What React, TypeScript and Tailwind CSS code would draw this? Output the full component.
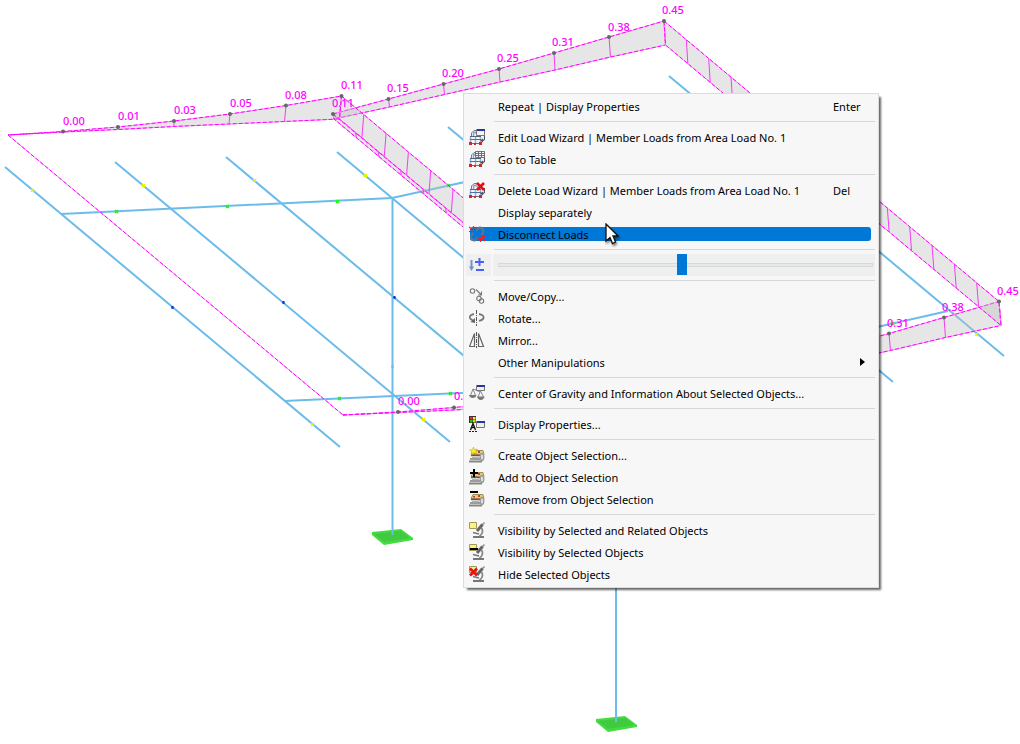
import { useState } from "react";
import type { ReactNode } from "react";

type Point = [number, number];

const toPoints = (points: Point[]) => points.map(p => p.join(",")).join(" ");

const members: Point[][] = [
  [[5, 167], [340, 447]],
  [[115, 162], [450, 442]],
  [[226, 157], [561, 437]],
  [[337, 152], [672, 432]],
  [[448, 127], [783, 407]],
  [[558, 102], [893, 382]],
  [[669, 76], [1004, 356]],
  [[61, 214], [392, 198], [725, 125]],
  [[284, 401], [616, 386], [948, 311]],
  [[392.5, 198], [392.5, 535]],
  [[616, 386], [616, 722]],
];

const leftTop: Point[] = [[8, 135], [63, 131.5], [118, 127], [174, 121], [230, 114], [286, 105.5], [341.5, 96]];
const leftBase: Point[] = [[8, 135], [63, 132], [118, 129.5], [174, 126.5], [229, 124], [284.5, 121.5], [339.5, 119]];
const backTop: Point[] = [[333, 114], [388.5, 99], [443.5, 84], [499, 69], [554, 53], [609, 37], [664, 21]];
const backBase: Point[] = [[334, 119], [389.5, 107], [444.5, 94.5], [500, 82], [555, 70], [610.5, 57], [665.5, 45]];
const frontTop: Point[] = [[343, 415], [398, 412], [454, 407.5], [510, 402], [666, 394], [889, 333.5], [944, 317.5], [999, 301.5]];
const frontBase: Point[] = [[343, 415], [398, 412.5], [454, 410], [510, 407], [667, 399], [890.5, 350.5], [945.5, 337.5], [1001, 325.5]];

// points spread evenly between the two ends of a member
const divide = (from: Point, to: Point, count: number): Point[] =>
  Array.from({ length: count + 1 }, (_, i) => [
    from[0] + ((to[0] - from[0]) * i) / count,
    from[1] + ((to[1] - from[1]) * i) / count,
  ]);

const strips: { top: Point[]; base: Point[] }[] = [
  { top: leftTop, base: leftBase },
  { top: backTop, base: backBase },
  { top: frontTop, base: frontBase },
  { top: divide([341.5, 96], [676, 376], 15), base: divide([339.5, 119], [675, 400], 15) },
  { top: divide([333, 114], [671, 396], 15), base: divide([334, 119], [671, 401], 15) },
  { top: divide([664, 21], [999, 301.5], 15), base: divide([665.5, 45], [1001, 325.5], 15) },
];

const loadDots: Point[] = [...leftTop.slice(1), ...backTop, ...frontTop.slice(1, 3), ...frontTop.slice(5)];

const labels: [number, number, string][] = [
  [63, 125, "0.00"],
  [118, 120, "0.01"],
  [174, 114, "0.03"],
  [230, 107, "0.05"],
  [285, 99, "0.08"],
  [341, 89, "0.11"],
  [332, 107, "0.11"],
  [387, 92, "0.15"],
  [442, 77, "0.20"],
  [497, 62, "0.25"],
  [552, 46, "0.31"],
  [608, 31, "0.38"],
  [662, 14, "0.45"],
  [887, 327, "0.31"],
  [942, 311, "0.38"],
  [997, 295, "0.45"],
  [398, 405, "0.00"],
  [454, 400, "0.01"],
];

const nodes: { color: string; size: number; at: Point[] }[] = [
  { color: "#e6f500", size: 3, at: [[32, 190], [143, 185], [254, 180], [365, 175], [312, 424], [423, 419], [976, 334]] },
  { color: "#1ff01f", size: 3, at: [[116, 211], [227, 206], [337, 201], [448, 185], [339, 398], [450, 393], [892, 323]] },
  { color: "#0b2fc4", size: 2, at: [[172, 307], [283, 302], [394, 297]] },
  { color: "#7ab4ee", size: 2, at: [[392, 366]] },
];

const supports: Point[] = [[392, 537], [616, 724]];

const Scene = () => (
  <svg viewBox="0 0 1020 744" className="block w-full" aria-label="Structural model">
    {supports.map(([x, y]) => (
      <g key={x}>
        <polygon points={toPoints([[x - 20, y - 5], [x + 9, y - 8], [x + 21, y + 1], [x + 21, y + 3], [x - 8, y + 8], [x - 20, y - 2]])} fill="#43dc43" />
        <polygon points={toPoints([[x - 18, y - 3], [x + 9, y - 6], [x + 18, y + 1], [x - 8, y + 5]])} fill="#3fca3f" />
      </g>
    ))}
    {members.map((m, i) => (
      <polyline key={i} points={toPoints(m)} fill="none" stroke="#6cbcea" strokeWidth="2" />
    ))}
    {nodes.map(({ color, size, at }) =>
      at.map(([x, y]) => (
        <path
          key={`${x}-${y}`}
          d={`M${x - size / 2 + 0.5} ${y - size / 2 + 0.5}l${size} ${size}m0 ${-size}l${-size} ${size}`}
          stroke={color}
          strokeWidth="1.5"
        />
      ))
    )}
    {strips.map(({ top, base }, i) => {
      const outline = toPoints([...top, ...[...base].reverse()]);
      return (
        <g key={i}>
          <polygon points={outline} fill="#c0c0c0" fillOpacity="0.4" stroke="#ff8cff" />
          <polygon points={outline} fill="none" stroke="#f0f" strokeDasharray="4 2" />
          {top.slice(1, -1).map(([x, y], j) => (
            <path key={j} d={`M${x} ${y}L${base[j + 1][0]} ${base[j + 1][1]}`} stroke="#f53df5" />
          ))}
        </g>
      );
    })}
    <path d="M8 135L343 415" stroke="#ff8cff" />
    <path d="M8 135L343 415" stroke="#f0f" strokeDasharray="4 2" />
    {loadDots.map(([x, y], i) => (
      <circle key={i} cx={x} cy={y} r="2" fill="#666" />
    ))}
    {labels.map(([x, y, value]) => (
      <text key={`${x}-${y}`} x={x} y={y} fill="#f0f" className="font-['Noto_Sans',sans-serif] text-[11px] font-medium">
        {value}
      </text>
    ))}
  </svg>
);

const Icon = ({ children }: { children: ReactNode }) => (
  <svg viewBox="0 0 16 16" className="block size-4" fill="none" aria-hidden="true">
    {children}
  </svg>
);

const LoadFrame = () => (
  <>
    <path d="M2.500 7V4L5 1.500h3" stroke="#6b7f9c" />
    <path d="M4 3.500h4" stroke="#8aa6cf" strokeWidth="2" />
    <path d="M4.500 4v4M8.500 4v4" stroke="#8aa6cf" strokeWidth="1.500" />
    <path d="M1 7.500h11" stroke="#54627c" />
    <path d="M1.500 8v6M6.500 8v6M11.500 8v6" stroke="#8fb0e0" strokeWidth="1.500" />
    <path d="M1 10.500h11" stroke="#4f6fa8" />
    <path d="M1 14.500h11" stroke="#77707c" />
    <path d="M0 13h3v3H0zM5 14h2v2H5zM10 13h3v3h-3z" fill="#d8232a" />
    <path d="M15.500 6v4.500l-2.500 2" stroke="#555" strokeWidth="1.200" />
    <path d="M11 11.500l3-2v4z" fill="#555" />
  </>
);

const EditIcon = () => (
  <Icon>
    <LoadFrame />
    <path d="M7.500 .5h8v6h-8z" fill="#f4f4f4" stroke="#777" />
    <path d="M8 0h8v2H8z" fill="#2638a0" />
  </Icon>
);

const TableIcon = () => (
  <Icon>
    <LoadFrame />
    <path d="M6.500 .5h9v6h-9zM6 2.500h10M6 4.500h10M9.500 0v7M12.500 0v7" fill="#f4f4f4" stroke="#666" strokeWidth=".9" />
  </Icon>
);

const DeleteIcon = () => (
  <Icon>
    <LoadFrame />
    <path d="M8 1l7 7M15 1L8 8" stroke="#e80c10" strokeWidth="2.500" />
  </Icon>
);

const DisconnectIcon = () => (
  <Icon>
    <path d="M4 6.500L2.500 9.500c-1.500 3.500 2.500 6 4.500 4l1.500-2.500" stroke="#5b7396" strokeWidth="2.200" />
    <path d="M12.500 9L14 6.500c1.500-3.500-2.500-6-5-4L7.500 5" stroke="#5b7396" strokeWidth="2.200" />
    <path d="M4.500 0v3M0 1l4 3M0 5.500h3M7.500 1L6 3.500M11.500 12v4M13 12l3 3M13 10.500h3M9.500 11.500l-1.500 3" stroke="#ff1a22" strokeWidth="1.200" />
  </Icon>
);

const ScaleIcon = () => (
  <Icon>
    <path d="M2.500 3v8" stroke="#6e93c9" strokeWidth="2" />
    <path d="M0 9.500h5L2.500 14z" fill="#6e93c9" />
    <path d="M6 5h9M10.500 1v8M7 13h8" stroke="#4a62f2" strokeWidth="2" />
  </Icon>
);

const MoveIcon = () => (
  <Icon>
    <g stroke="#777" strokeWidth="1.100">
      <circle cx="3.500" cy="3" r="2.200" />
      <circle cx="10" cy="10.500" r="2.200" />
      <circle cx="12.500" cy="13" r="2.200" />
      <path d="M7 1.500L12 6.500M12.500 3.500V7H9" />
    </g>
  </Icon>
);

const RotateIcon = () => (
  <Icon>
    <path d="M5 4C2 4.500 .5 6 1 8c.3 1 1.500 2 3 2.500M10 4c3 .5 5 2 4.500 4-.4 1.500-2 2.300-4.500 2.800" stroke="#777" strokeWidth="1.800" />
    <path d="M1.500 12L6 8v5z" fill="#666" />
    <path d="M7.500 0v16" stroke="#555" strokeDasharray="4 1 1 1" />
  </Icon>
);

const MirrorIcon = () => (
  <Icon>
    <path d="M5.500 1.500v13h-5zM9.500 1.500v13h5z" stroke="#666" strokeWidth="1.200" />
    <path d="M7.500 0v16" stroke="#555" strokeDasharray="4 1 1 1" />
  </Icon>
);

const GravityIcon = () => (
  <Icon>
    <path d="M4 4L1.500 10.500M4 4l2.500 6.500M4.500 4L11 7M11.500 6L9 12M11.500 6L14.500 12" stroke="#888" />
    <path d="M0 10h7.500c-.5 4-7 4-7.500 0zM8 11.500h7.500c-.5 4.500-7 4.500-7.500 0z" fill="#777" />
    <path d="M7.500 .5h8v5h-8z" fill="#eee" stroke="#777" />
    <path d="M8 0h8v2H8z" fill="#2638a0" />
  </Icon>
);

const DisplayIcon = () => (
  <Icon>
    <path d="M0 0h7v7H0z" fill="#333" />
    <path d="M1 1h2.500v2.500H1z" fill="#f22" />
    <path d="M4 1h2.500v2.500H4z" fill="#fe2" />
    <path d="M1 4h2.500v2.500H1z" fill="#18c818" />
    <path d="M4 4h2.500v2.500H4z" fill="#ded820" />
    <path d="M1.500 14L4 7.500 6.500 14M2.500 11.500h3" stroke="#111" strokeWidth="1.400" />
    <path d="M0 15.500h8" stroke="#222" strokeDasharray="2 1" />
    <path d="M7.500 5.500h8v6h-8z" fill="#eee" stroke="#777" />
    <path d="M8 5h8v2H8z" fill="#2638a0" />
  </Icon>
);

const SelectionBase = () => (
  <>
    <path d="M4 3.500h10l1 4H2z" fill="#e3cf72" stroke="#8b7b42" strokeWidth=".8" />
    <path d="M9 4h2v2H9zM4 5h2v1.500H4z" fill="#d23b2c" />
    <path d="M2 8.500h9" stroke="#5c5c50" strokeWidth="1.500" />
    <path d="M3 10.500h7" stroke="#b5b5a8" />
    <path d="M1 12h10" stroke="#5f5f5f" strokeWidth="1.200" />
    <path d="M0 14.500h13" stroke="#868686" strokeWidth="2" />
    <ellipse cx="13" cy="10" rx="1.800" ry="3.500" fill="#ddd" stroke="#999" strokeWidth="1.300" />
  </>
);

const CreateIcon = () => (
  <Icon>
    <SelectionBase />
    <path d="M4.500 0l1 2.500 3-.5-2 2.500 1.500 2.500-3-1-2.500 2 .5-3L.5 3l3-.5z" fill="#f6ec28" stroke="#b9a514" strokeWidth=".5" />
  </Icon>
);

const AddIcon = () => (
  <Icon>
    <SelectionBase />
    <path d="M1 4h8M5 0v8" stroke="#000" strokeWidth="2" />
  </Icon>
);

const RemoveIcon = () => (
  <Icon>
    <SelectionBase />
    <path d="M1 1h8" stroke="#000" strokeWidth="2" />
  </Icon>
);

const Microscope = () => (
  <>
    <path d="M15.500 .5l-3 3" stroke="#999" strokeWidth="1.600" />
    <path d="M13.500 2.500L8 9" stroke="#666" strokeWidth="3" />
    <path d="M12.500 6c2 3 1 6-2 8" stroke="#888" strokeWidth="1.800" />
    <path d="M4 10.500l6 1.500" stroke="#777" strokeWidth="1.500" />
    <path d="M4 15h11" stroke="#777" strokeWidth="2" />
  </>
);

const Sheet = () => <path d="M.5 .5h7v6h-7z" fill="#fdf27c" stroke="#a39a5a" />;

const RelatedIcon = () => (
  <Icon>
    <Microscope />
    <Sheet />
  </Icon>
);

const VisibleIcon = () => (
  <Icon>
    <Microscope />
    <Sheet />
    <path d="M1 5h8" stroke="#000" strokeWidth="2" />
  </Icon>
);

const HideIcon = () => (
  <Icon>
    <Microscope />
    <Sheet />
    <path d="M1 2.500l7 7M8 2.500l-7 7" stroke="#ea1216" strokeWidth="2.800" />
  </Icon>
);

interface MenuItemProps {
  label: string;
  icon?: ReactNode;
  shortcut?: string;
  submenu?: boolean;
  active?: boolean;
}

const MenuItem = ({ label, icon, shortcut, submenu, active }: MenuItemProps) => (
  <button
    type="button"
    role="menuitem"
    aria-haspopup={submenu ? "menu" : undefined}
    className="relative flex h-[22px] w-full items-center pl-[5px] text-left"
  >
    {active && <span className="absolute inset-y-1 left-[6px] right-[7px] rounded-[3px] bg-[#0078d7]" />}
    <span className="relative mr-[13px] size-4 shrink-0">{icon}</span>
    <span className="relative grow whitespace-nowrap pt-[2px]">{label}</span>
    {shortcut && <span className="w-[45px] shrink-0 pt-[2px]">{shortcut}</span>}
    {submenu && (
      <svg viewBox="0 0 5 8" className="mr-[13px] h-2 w-[5px]" aria-hidden="true">
        <path d="M0 0l5 4-5 4z" fill="#000" />
      </svg>
    )}
  </button>
);

const Separator = () => <div role="separator" className="my-1 ml-[30px] mr-[3px] h-px bg-[#d7d7d7]" />;

const ScaleSlider = () => {
  const [scale, setScale] = useState(49);

  return (
    <div className="flex h-[22px] gap-[2px] pl-[2px] pr-[3px]">
      <label htmlFor="load-scale" className="w-[25px] shrink-0 bg-[#efefef] py-[3px] pl-[3px]">
        <ScaleIcon />
      </label>
      <div className="flex grow items-center bg-[#efefef] pl-[5px] pr-[2px]">
        <input
          id="load-scale"
          type="range"
          aria-label="Load scale"
          min={0}
          max={100}
          value={scale}
          onChange={e => setScale(Number(e.target.value))}
          className="h-[22px] w-full appearance-none bg-transparent [&::-webkit-slider-runnable-track]:h-1 [&::-webkit-slider-runnable-track]:border [&::-webkit-slider-runnable-track]:border-[#d6d9d9] [&::-webkit-slider-runnable-track]:bg-[#e7eaea] [&::-webkit-slider-thumb]:mt-[-10px] [&::-webkit-slider-thumb]:h-[21px] [&::-webkit-slider-thumb]:w-[10px] [&::-webkit-slider-thumb]:appearance-none [&::-webkit-slider-thumb]:bg-[#0078d7]"
        />
      </div>
    </div>
  );
};

const ContextMenu = () => (
  <div
    role="menu"
    className="absolute left-[463px] top-[93px] w-[416px] border border-[#dcdcdc] bg-[#f7f7f7] pb-[2px] pt-px font-['Noto_Sans',sans-serif] text-[11px] leading-4 text-black shadow-[3px_3px_2px_-1px_rgba(0,0,0,0.6)]"
  >
    <MenuItem label="Repeat | Display Properties" shortcut="Enter" />
    <Separator />
    <MenuItem label="Edit Load Wizard | Member Loads from Area Load No. 1" icon={<EditIcon />} />
    <MenuItem label="Go to Table" icon={<TableIcon />} />
    <Separator />
    <MenuItem label="Delete Load Wizard | Member Loads from Area Load No. 1" icon={<DeleteIcon />} shortcut="Del" />
    <MenuItem label="Display separately" />
    <MenuItem label="Disconnect Loads" icon={<DisconnectIcon />} active />
    <Separator />
    <ScaleSlider />
    <Separator />
    <MenuItem label="Move/Copy..." icon={<MoveIcon />} />
    <MenuItem label="Rotate..." icon={<RotateIcon />} />
    <MenuItem label="Mirror..." icon={<MirrorIcon />} />
    <MenuItem label="Other Manipulations" submenu />
    <Separator />
    <MenuItem label="Center of Gravity and Information About Selected Objects..." icon={<GravityIcon />} />
    <Separator />
    <MenuItem label="Display Properties..." icon={<DisplayIcon />} />
    <Separator />
    <MenuItem label="Create Object Selection..." icon={<CreateIcon />} />
    <MenuItem label="Add to Object Selection" icon={<AddIcon />} />
    <MenuItem label="Remove from Object Selection" icon={<RemoveIcon />} />
    <Separator />
    <MenuItem label="Visibility by Selected and Related Objects" icon={<RelatedIcon />} />
    <MenuItem label="Visibility by Selected Objects" icon={<VisibleIcon />} />
    <MenuItem label="Hide Selected Objects" icon={<HideIcon />} />
  </div>
);

const Cursor = () => (
  <svg
    viewBox="0 0 14 22"
    className="pointer-events-none absolute left-[605px] top-[223px] h-[22px] w-[14px] drop-shadow-[1px_2px_1px_rgba(0,0,0,0.5)]"
    aria-hidden="true"
  >
    <path d="M1 1v17l4-3.500 2.500 6 3-1.500L8 13h5z" fill="#fff" stroke="#111" strokeWidth="1.300" />
  </svg>
);

const App = () => (
  <main className="relative min-h-screen overflow-hidden bg-white">
    <Scene />
    <ContextMenu />
    <Cursor />
  </main>
);

export default App;
